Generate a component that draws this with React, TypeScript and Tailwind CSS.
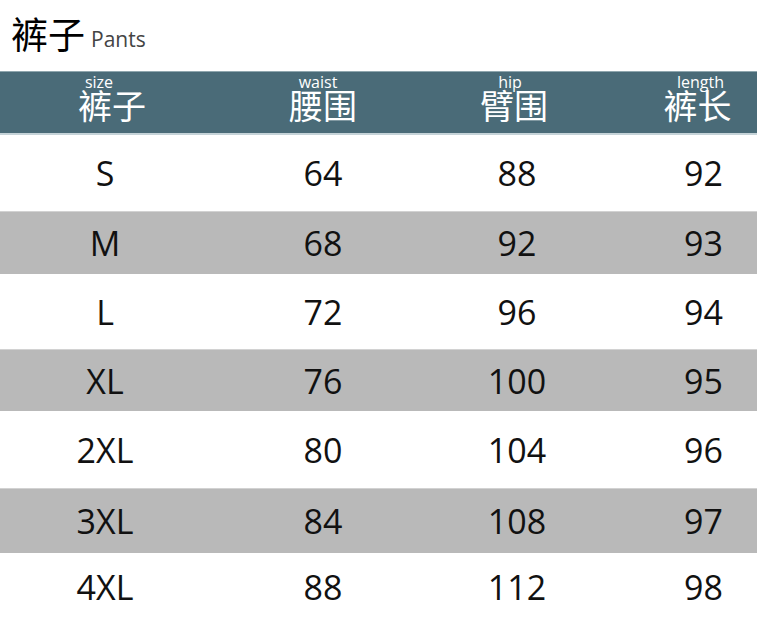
const font = "font-['Open_Sans','Noto_Sans_CJK_SC',sans-serif]"

const headers = [
  { en: "size", zh: "裤子", enShift: "pr-[12px]", zhShift: "pl-[14px]" },
  { en: "waist", zh: "腰围", enShift: "pr-[10px]", zhShift: "pl-0" },
  { en: "hip", zh: "臂围", enShift: "pr-[14px]", zhShift: "pr-[6px]" },
  { en: "length", zh: "裤长", enShift: "pr-[6px]", zhShift: "pr-[12px]" },
]

const rows = [
  ["S", "64", "88", "92"],
  ["M", "68", "92", "93"],
  ["L", "72", "96", "94"],
  ["XL", "76", "100", "95"],
  ["2XL", "80", "104", "96"],
  ["3XL", "84", "108", "97"],
  ["4XL", "88", "112", "98"],
]

// white rows are a bit taller than the gray ones
const rowHeights = ["h-[76px]", "h-[63px]", "h-[75px]", "h-[62px]", "h-[77px]", "h-[65px]", "h-[67px]"]

const cols = "grid grid-cols-[210px_226px_162px_1fr]"

export default function App() {
  return (
    <div className={`w-[757px] h-[620px] overflow-hidden bg-white ${font}`}>
      {/* Title */}
      <div className="h-[71px] flex items-center pl-[11px] pb-[2px]">
        <span className="text-[37px] leading-none text-black">裤子</span>
        <span className="text-[21px] leading-none text-[#444] ml-[6px] mt-[9px]">Pants</span>
      </div>

      {/* Header */}
      <div className={`${cols} h-[64px] bg-[#4a6b78] border-t border-[#8fa6ae] border-b-2 border-b-[#c5d3d8] text-white`}>
        {headers.map((h, i) => (
          <div key={h.en} className={`flex flex-col items-center ${i === 3 ? "pl-[52px]" : ""}`}>
            <span className={`text-[16px] leading-[13px] mt-[4px] ${h.enShift}`}>{h.en}</span>
            <span className={`text-[34px] leading-none ${h.zhShift}`}>{h.zh}</span>
          </div>
        ))}
      </div>

      {/* Rows */}
      {rows.map((row, r) => (
        <div
          key={row[0]}
          className={`${cols} ${rowHeights[r]} items-center text-[34px] leading-none text-[#111] ${
            r % 2 === 1 ? "bg-[#b9b9b9] border-t border-[#d2d2d2]" : "bg-white"
          }`}
        >
          {row.map((cell, i) => (
            <div key={i} className={`text-center ${i === 3 ? "pl-[52px]" : ""}`}>
              {cell}
            </div>
          ))}
        </div>
      ))}
    </div>
  )
}
